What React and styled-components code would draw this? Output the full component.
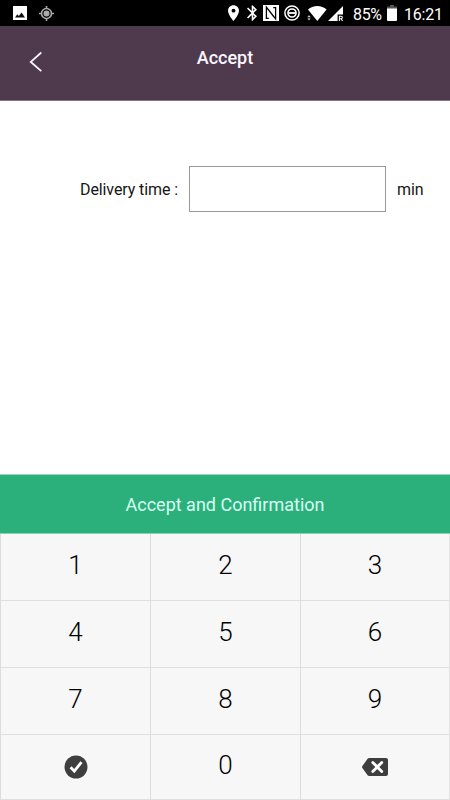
import React, { useState } from "react";
import styled, { createGlobalStyle } from "styled-components";

const GlobalStyle = createGlobalStyle`
  * {
    box-sizing: border-box;
  }
  body {
    margin: 0;
    background: #fff;
    font-family: Roboto, "Liberation Sans", sans-serif;
  }
`;

const Screen = styled.div`
  display: flex;
  flex-direction: column;
  width: 450px;
  height: 800px;
  background: #fff;
  overflow: hidden;
`;

const StatusBar = styled.div`
  display: flex;
  justify-content: space-between;
  align-items: center;
  height: 26px;
  padding: 0 8px 0 13px;
  background: #000;
  color: #fff;
`;

const StatusGroup = styled.div`
  display: flex;
  align-items: center;
`;

const StatusIcon = styled.svg`
  display: block;
  flex: none;
  margin-left: ${(props) => props.$gap || 0}px;
`;

const StatusText = styled.span`
  width: ${(props) => props.$width}px;
  margin-left: ${(props) => props.$gap}px;
  padding-top: 3px;
  font-size: 16px;
  line-height: 23px;
  white-space: nowrap;
  letter-spacing: ${(props) => props.$spacing || 0}px;
`;

const Header = styled.header`
  display: grid;
  grid-template-columns: 72px 1fr 72px;
  height: 75px;
  background: #4f3a4d;
  border-bottom: 1px solid #85747f;
`;

const BackButton = styled.button`
  display: flex;
  justify-content: center;
  align-items: flex-start;
  padding: 25px 0 0;
  border: 0;
  background: none;
  cursor: pointer;
`;

const Title = styled.h1`
  margin: 0;
  padding-top: 20px;
  color: #fbf5fc;
  font-size: 18px;
  font-weight: 500;
  line-height: 24px;
  text-align: center;
`;

const Content = styled.main`
  flex: 1;
  padding-top: 65px;
`;

const Field = styled.label`
  display: flex;
  align-items: center;
  padding-left: 80px;
  color: #161616;
  font-size: 16px;
  letter-spacing: -0.1px;
`;

const FieldName = styled.span`
  width: 109px;
  white-space: nowrap;
`;

const TimeInput = styled.input`
  width: 197px;
  height: 46px;
  margin-right: 11px;
  padding: 0 12px;
  border: 1px solid #999;
  border-radius: 0;
  outline: none;
  background: #fff;
  font: inherit;
`;

const ConfirmButton = styled.button`
  height: 60px;
  padding: 0;
  border: 0;
  border-top: 1px solid #9bd8bb;
  border-bottom: 1px solid #8fcfb2;
  background: #2bb07c;
  color: #d8fff0;
  font-family: inherit;
  font-size: 18px;
  cursor: pointer;
`;

const Keypad = styled.div`
  display: grid;
  grid-template-columns: 150px 150px 149px;
  grid-template-rows: 67px 67px 67px 65px;
  height: 266px;
  border-right: 1px solid #e4e4e4;
`;

const Key = styled.button`
  display: flex;
  justify-content: center;
  align-items: center;
  padding: 0 0 ${(props) => (props.$icon ? 0 : 4)}px;
  border: 0;
  border-left: 1px solid #dcdcdc;
  border-bottom: 1px solid #dfdfdf;
  background: #f7f7f7;
  color: #000;
  font-family: inherit;
  font-size: 26px;
  font-weight: 300;
  cursor: pointer;
`;

const digits = ["1", "2", "3", "4", "5", "6", "7", "8", "9"];

function StatusIcons() {
  return (
    <StatusBar>
      <StatusGroup>
        <StatusIcon width="14" height="14" viewBox="0 0 14 14">
          <path fill="#fff" d="M0 0h14v14H0z" />
          <path fill="#111" d="M2 11.5 4.3 8.2l1.5 1.7L8.6 6.6 12 11.5z" />
        </StatusIcon>
        <StatusIcon $gap={12} width="15" height="15" viewBox="0 0 15 15">
          <circle cx="7.5" cy="7.5" r="5" fill="none" stroke="#aaa" strokeWidth="1.6" />
          <circle cx="7.5" cy="7.5" r="3" fill="#aaa" />
          <path stroke="#aaa" strokeWidth="1.6" d="M7.5 0v3M7.5 12v3M0 7.5h3M12 7.5h3" />
        </StatusIcon>
      </StatusGroup>
      <StatusGroup>
        <StatusIcon width="11" height="16" viewBox="5 2 14 20">
          <path
            fill="#fff"
            d="M12 2C8.13 2 5 5.13 5 9c0 5.25 7 13 7 13s7-7.75 7-13c0-3.87-3.13-7-7-7zm0 9.5a2.5 2.5 0 0 1 0-5 2.5 2.5 0 0 1 0 5z"
          />
        </StatusIcon>
        <StatusIcon $gap={8} width="11" height="16" viewBox="5 2 14 20">
          <path
            fill="#fff"
            d="M17.71 7.71 12 2h-1v7.59L6.41 5 5 6.41 10.59 12 5 17.59 6.41 19 11 14.41V22h1l5.71-5.71-4.3-4.29 4.3-4.29zM13 5.83l1.88 1.88L13 9.59V5.83zm1.88 10.46L13 18.17v-3.76l1.88 1.88z"
          />
        </StatusIcon>
        <StatusIcon $gap={5} width="16" height="16" viewBox="0 0 16 16">
          <path fill="#fff" d="M0 0h16v16H0z" />
          <path fill="none" stroke="#000" strokeWidth="1.3" d="M5.8 13.4H3.4V2.2l7.6 10M10.2 2.6h2.4v11.2L5.4 4.6" />
        </StatusIcon>
        <StatusIcon $gap={5} width="16" height="16" viewBox="0 0 16 16">
          <circle cx="8" cy="8" r="7.1" fill="none" stroke="#fff" strokeWidth="1.5" />
          <circle cx="8" cy="8" r="4" fill="none" stroke="#fff" strokeWidth="1.7" />
          <path stroke="#fff" strokeWidth="1.8" d="M5 8h6" />
        </StatusIcon>
        <StatusIcon $gap={7} width="20" height="15" viewBox="0 0 20 15">
          <path fill="#fff" d="M10.3 15 1 3.4C3.5 1.3 6.8 0 10.3 0s6.8 1.3 9.3 3.4z" />
          <path fill="#fff" stroke="#000" strokeWidth=".4" d="M.2 11.3 2 9l1.8 2.3zM.2 12.3h3.6L2 14.6z" />
        </StatusIcon>
        <StatusIcon $gap={1} width="16" height="15" viewBox="0 0 16 15">
          <path fill="#fff" d="M15 0v8.6H9.6V15H0z" />
          <path fill="none" stroke="#fff" strokeWidth="1.1" d="M11.4 15V10.2h1.7a1.2 1.2 0 0 1 0 2.5h-1.7M13.1 12.7l1.5 2.3" />
        </StatusIcon>
        <StatusText $gap={9} $width={29} $spacing={-0.35}>85%</StatusText>
        <StatusIcon $gap={5} width="10" height="16" viewBox="0 0 10 16">
          <path fill="#555" d="M3 0h4v1.5h3V4H0V1.5h3z" />
          <path fill="#fff" d="M0 3.5h10V15a1 1 0 0 1-1 1H1a1 1 0 0 1-1-1z" />
        </StatusIcon>
        <StatusText $gap={7} $width={38} $spacing={-0.2}>16:21</StatusText>
      </StatusGroup>
    </StatusBar>
  );
}

function App() {
  const [time, setTime] = useState("");
  const [accepted, setAccepted] = useState(false);

  const onDigit = (digit) => {
    setAccepted(false);
    setTime(time + digit);
  };

  const onAccept = () => {
    if (time !== "") {
      setAccepted(true);
    }
  };

  return (
    <Screen>
      <GlobalStyle />
      <StatusIcons />
      <Header>
        <BackButton aria-label="Back" onClick={() => setTime("")}>
          <svg width="14" height="22" viewBox="0 0 14 22">
            <path fill="none" stroke="#fbf5fc" strokeWidth="1.8" d="M12.3 1.5 1.8 10.9l10.5 9.3" />
          </svg>
        </BackButton>
        <Title>Accept</Title>
      </Header>

      <Content>
        <Field>
          <FieldName>Delivery time :</FieldName>
          <TimeInput value={time} readOnly={accepted} onChange={(e) => setTime(e.target.value)} />
          min
        </Field>
      </Content>

      <ConfirmButton onClick={onAccept}>Accept and Confirmation</ConfirmButton>
      <Keypad>
        {digits.map((digit) => (
          <Key key={digit} onClick={() => onDigit(digit)}>
            {digit}
          </Key>
        ))}
        <Key $icon aria-label="Confirm" onClick={onAccept}>
          <svg width="24" height="24" viewBox="0 0 24 24">
            <circle cx="12" cy="12" r="11.5" fill="#3e3e3e" />
            <path fill="none" stroke="#fff" strokeWidth="2.8" d="m6.6 12.2 3.7 3.9 7.2-9" />
          </svg>
        </Key>
        <Key onClick={() => onDigit("0")}>0</Key>
        <Key $icon aria-label="Delete" onClick={() => setTime(time.slice(0, -1))}>
          <svg width="26" height="18" viewBox="0 0 26 18">
            <path fill="#3e3e3e" d="M7.2 0H24a2 2 0 0 1 2 2v14a2 2 0 0 1-2 2H7.2a2 2 0 0 1-1.6-.8L.4 10a1.7 1.7 0 0 1 0-2L5.6.8A2 2 0 0 1 7.2 0z" />
            <path stroke="#fff" strokeWidth="2.8" strokeLinecap="round" d="m10.8 4.4 9 9.2M19.8 4.4l-9 9.2" />
          </svg>
        </Key>
      </Keypad>
    </Screen>
  );
}

export default App;
